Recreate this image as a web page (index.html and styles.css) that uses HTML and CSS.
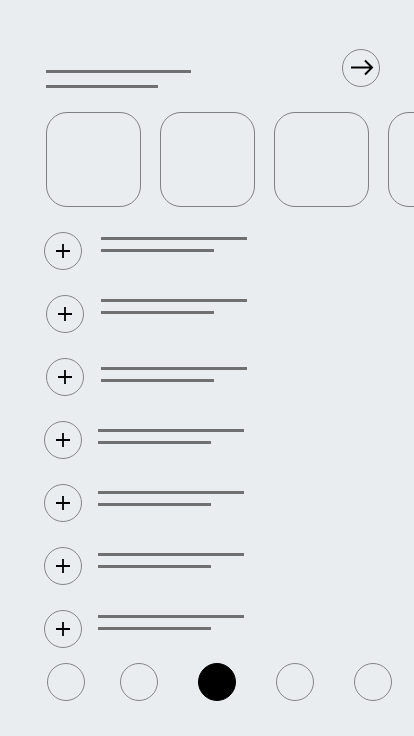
FILE: index.html
```html
<!DOCTYPE html>
<html>
<head>
<meta charset="utf-8">
<link rel="stylesheet" href="styles.css">
</head>
<body>
<div class="page">
  <header class="header">
    <div class="title">
      <div class="bar bar-long"></div>
      <div class="bar bar-short"></div>
    </div>
    <div class="circle arrow">
      <svg width="38" height="38" viewBox="0 0 38 38"><path d="M9 18.5H30M23 11.5L30 18.5L23 25.5" fill="none" stroke="#000" stroke-width="2"/></svg>
    </div>
  </header>

  <div class="cards">
    <div class="card"></div>
    <div class="card"></div>
    <div class="card"></div>
    <div class="card"></div>
  </div>

  <ul class="list">
    <li class="row"><span class="circle plus"><svg width="16" height="16" viewBox="0 0 16 16"><path d="M8 1V15M1 8H15" stroke="#000" stroke-width="1.8"/></svg></span><div class="text"><div class="bar bar-a"></div><div class="bar bar-b"></div></div></li>
    <li class="row"><span class="circle plus"><svg width="16" height="16" viewBox="0 0 16 16"><path d="M8 1V15M1 8H15" stroke="#000" stroke-width="1.8"/></svg></span><div class="text"><div class="bar bar-a"></div><div class="bar bar-b"></div></div></li>
    <li class="row"><span class="circle plus"><svg width="16" height="16" viewBox="0 0 16 16"><path d="M8 1V15M1 8H15" stroke="#000" stroke-width="1.8"/></svg></span><div class="text"><div class="bar bar-a"></div><div class="bar bar-b"></div></div></li>
    <li class="row"><span class="circle plus"><svg width="16" height="16" viewBox="0 0 16 16"><path d="M8 1V15M1 8H15" stroke="#000" stroke-width="1.8"/></svg></span><div class="text"><div class="bar bar-a"></div><div class="bar bar-b"></div></div></li>
    <li class="row"><span class="circle plus"><svg width="16" height="16" viewBox="0 0 16 16"><path d="M8 1V15M1 8H15" stroke="#000" stroke-width="1.8"/></svg></span><div class="text"><div class="bar bar-a"></div><div class="bar bar-b"></div></div></li>
    <li class="row"><span class="circle plus"><svg width="16" height="16" viewBox="0 0 16 16"><path d="M8 1V15M1 8H15" stroke="#000" stroke-width="1.8"/></svg></span><div class="text"><div class="bar bar-a"></div><div class="bar bar-b"></div></div></li>
    <li class="row"><span class="circle plus"><svg width="16" height="16" viewBox="0 0 16 16"><path d="M8 1V15M1 8H15" stroke="#000" stroke-width="1.8"/></svg></span><div class="text"><div class="bar bar-a"></div><div class="bar bar-b"></div></div></li>
  </ul>

  <nav class="dots">
    <span class="dot"></span>
    <span class="dot"></span>
    <span class="dot dot-active"></span>
    <span class="dot"></span>
    <span class="dot"></span>
  </nav>
</div>
</body>
</html>
```
FILE: styles.css
```css
html, body {
  margin: 0;
  padding: 0;
  background: #e9edf0;
  font-family: "Liberation Sans", Arial, sans-serif;
}

.page {
  width: 414px;
  height: 736px;
  overflow: hidden;
  padding-top: 49px;
  box-sizing: border-box;
}

.bar {
  height: 3px;
  background: #707070;
}

.header {
  display: flex;
  justify-content: space-between;
  align-items: flex-start;
  height: 38px;
  padding: 0 34px 0 46px;
}

.title {
  display: flex;
  flex-direction: column;
  gap: 12px;
  padding-top: 21px;
}

.bar-long { width: 145px; }
.bar-short { width: 112px; }

.circle {
  width: 38px;
  height: 38px;
  box-sizing: border-box;
  border: 1px solid #858585;
  border-radius: 50%;
  display: flex;
  align-items: center;
  justify-content: center;
  flex: none;
}

.arrow svg { display: block; margin: -1px; }

.cards {
  display: flex;
  gap: 19px;
  margin-top: 25px;
  padding-left: 46px;
}

.card {
  flex: none;
  width: 95px;
  height: 95px;
  box-sizing: border-box;
  border: 1px solid #808080;
  border-radius: 21px;
}

.list {
  list-style: none;
  margin: 25px 0 0;
  padding: 0;
  display: flex;
  flex-direction: column;
  gap: 25px;
}

.row {
  display: flex;
  align-items: flex-start;
  height: 38px;
  padding-left: 44px;
}

.text {
  display: flex;
  flex-direction: column;
  gap: 9px;
  margin-left: 16px;
  margin-top: 6px;
}

.bar-a { width: 146px; }
.bar-b { width: 113px; }

.row:nth-child(1) .text { margin-left: 19px; }
.row:nth-child(2), .row:nth-child(3) { padding-left: 46px; }
.row:nth-child(2) .text, .row:nth-child(3) .text { margin-left: 17px; }
.row:nth-child(1) .text { margin-top: 5px; }
.row:nth-child(2) .text { margin-top: 4px; }
.row:nth-child(3) .text { margin-top: 9px; }
.row:nth-child(4) .text { margin-top: 8px; }
.row:nth-child(5) .text { margin-top: 7px; }
.row:nth-child(6) .text { margin-top: 6px; }
.row:nth-child(7) .text { margin-top: 5px; }

.dots {
  display: flex;
  gap: 40px;
  margin-top: 15px;
  padding-left: 47px;
}

.dot {
  width: 38px;
  height: 38px;
  box-sizing: border-box;
  border: 1px solid #858585;
  border-radius: 50%;
}

.dot:first-child { margin-right: -5px; }

.dot-active {
  background: #000;
  border-color: #000;
}
```
